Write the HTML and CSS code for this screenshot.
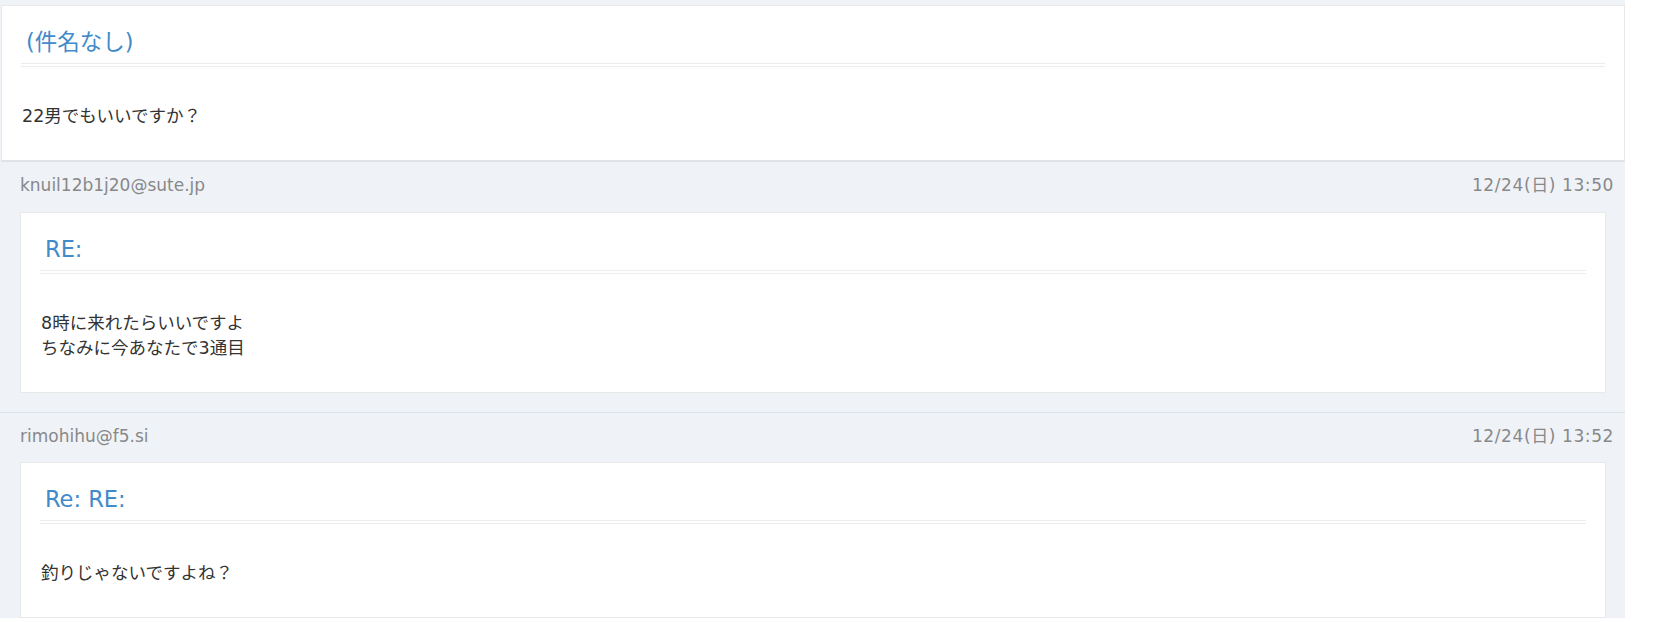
FILE: index.html
```html
<!DOCTYPE html>
<html lang="ja">
<head>
<meta charset="utf-8">
<title>(件名なし)</title>
<link rel="stylesheet" href="styles.css">
</head>
<body>
<div class="thread">
  <div class="card card-top">
    <div class="card-head"><h4 class="subject">(件名なし)</h4></div>
    <div class="card-body">22男でもいいですか？</div>
  </div>
  <div class="reply reply-first">
    <div class="reply-meta">
      <span class="from">knuil12b1j20@sute.jp</span>
      <span class="date">12/24(日) 13:50</span>
    </div>
    <div class="card">
      <div class="card-head"><h4 class="subject">RE:</h4></div>
      <div class="card-body">8時に来れたらいいですよ<br>ちなみに今あなたで3通目</div>
    </div>
  </div>
  <div class="reply">
    <div class="reply-meta">
      <span class="from">rimohihu@f5.si</span>
      <span class="date">12/24(日) 13:52</span>
    </div>
    <div class="card">
      <div class="card-head"><h4 class="subject">Re: RE:</h4></div>
      <div class="card-body">釣りじゃないですよね？</div>
    </div>
  </div>
</div>
</body>
</html>
```

FILE: styles.css
```css
html, body {
  margin: 0;
  padding: 0;
  background: #ffffff;
}

body {
  font-family: "DejaVu Sans", "Noto Sans CJK JP", sans-serif;
  font-size: 17.5px;
  line-height: 25px;
  color: #333333;
}

.thread {
  width: 1625px;
  background: #eff3f8;
  padding-top: 5px;
}

.card {
  background: #ffffff;
  border: 1px solid #e9e9e9;
  padding: 0 19px;
}

.card-top {
  margin-left: 1px;
  border-bottom: 2px solid #dfe3e8;
}

.card-head {
  padding: 24px 0 8px;
  border-bottom: 4px double #ececec;
}

.subject {
  margin: 0;
  padding-left: 5px;
  font-family: "DejaVu Sans", "Noto Sans CJK JP", sans-serif;
  font-weight: normal;
  font-size: 22.5px;
  line-height: 25px;
  color: #428bca;
}

.card-body {
  padding: 37px 0 31px 1px;
}

.reply {
  padding: 11px 19px 0 20px;
  border-top: 1px solid #d9e3ec;
}

.reply-first {
  border-top: none;
  padding-bottom: 19px;
}

.reply-meta {
  display: flex;
  justify-content: space-between;
  margin-right: -8px;
  padding-bottom: 13px;
  font-size: 17px;
  color: #888888;
}

.reply-first .reply-meta {
  padding-bottom: 14px;
}

.date {
  letter-spacing: 0.6px;
}
```
